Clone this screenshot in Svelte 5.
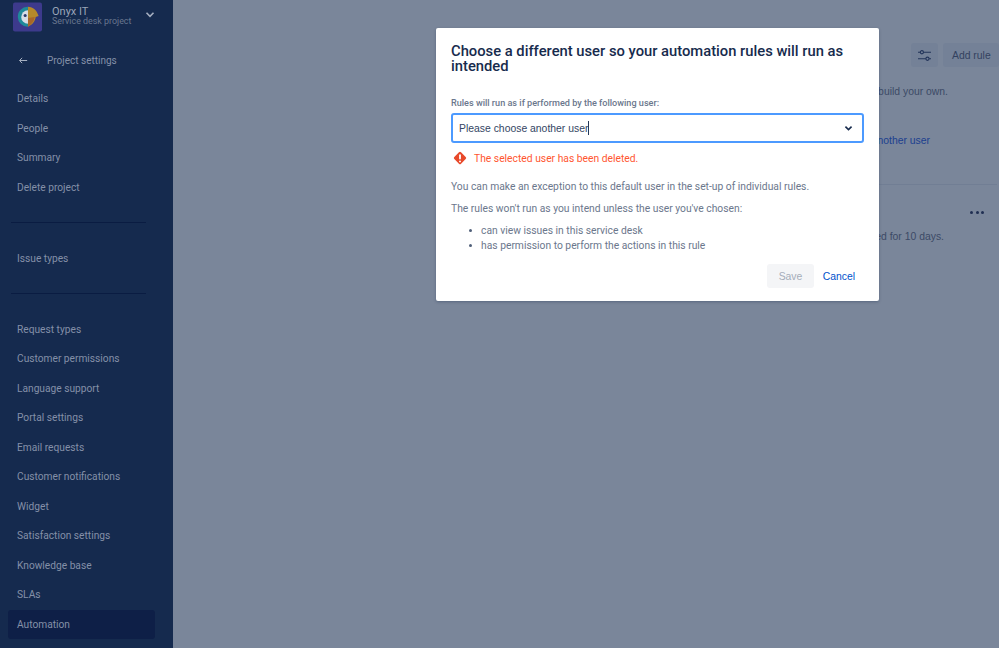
<script>
  const groups = [
    ['Details', 'People', 'Summary', 'Delete project'],
    ['Issue types'],
    ['Request types', 'Customer permissions', 'Language support', 'Portal settings', 'Email requests', 'Customer notifications', 'Widget', 'Satisfaction settings', 'Knowledge base', 'SLAs', 'Automation']
  ];
</script>

<div class="page">
  <aside class="sidebar">
    <header class="project">
      <svg class="logo" viewBox="0 0 30 30" aria-hidden="true">
        <rect width="30" height="30" rx="2" fill="#3d3a8c"/>
        <path d="M15.500 4.500A10 10 0 0 0 5 15a10 10 0 0 0 10.500 10z" fill="#1f8a9a"/>
        <path d="M15.500 8A7 7 0 0 0 8.500 15a7 7 0 0 0 7 7z" fill="#d8dde6"/>
        <circle cx="12.600" cy="13.500" r="1.600" fill="#2b3a6b"/>
        <path d="M15.500 4.500c5.500 0 9 3.600 11 9.500l-3 1c-.6 4.500-3.500 8-8 10z" fill="#b5892a"/>
        <path d="M15.500 16l7-1c-.8 4.200-3 7.600-7 9.800z" fill="#a8662a"/>
      </svg>
      <div class="project-text">
        <div class="project-name">Onyx IT</div>
        <div class="project-type">Service desk project</div>
      </div>
      <svg class="project-chevron" viewBox="0 0 10 8" aria-hidden="true"><path d="M1.500 1.800 5 5.300l3.500-3.500" /></svg>
    </header>

    <div class="back">
      <svg viewBox="0 0 12 10" aria-hidden="true"><path d="M11 5H2M5 1.800 1.800 5 5 8.200"/></svg>
      <span>Project settings</span>
    </div>

    {#each groups as group, i}
      {#if i > 0}<div class="rule"></div>{/if}
      <nav class="group">
        {#each group as item}
          <div class="item" class:active={item === 'Automation'}>{item}</div>
        {/each}
      </nav>
    {/each}
  </aside>

  <main class="content">
    <div class="toolbar">
      <div class="icon-btn">
        <svg viewBox="0 0 16 14" aria-hidden="true">
          <path d="M1 3.500h2.500M7 3.500h8M1 10.500h8.500M13 10.500h2"/>
          <circle cx="5.200" cy="3.500" r="1.700"/>
          <circle cx="11.200" cy="10.500" r="1.700"/>
        </svg>
      </div>
      <div class="add-rule">Add rule</div>
    </div>
    <p class="intro">Use a template or build your own.</p>
    <a class="actor" href="#top">Choose another user</a>
    <div class="divider"></div>
    <div class="more"><i></i><i></i><i></i></div>
    <p class="note">This rule has been disabled for 10 days.</p>
  </main>

  <section class="modal" role="dialog">
    <h1>Choose a different user so your automation rules will run as intended</h1>
    <div class="label">Rules will run as if performed by the following user:</div>
    <div class="select">
      <span class="value">Please choose another user</span><span class="caret"></span>
      <svg viewBox="0 0 10 8" aria-hidden="true"><path d="M1.500 1.800 5 5.300l3.500-3.500"/></svg>
    </div>
    <div class="error">
      <svg viewBox="0 0 24 24" aria-hidden="true">
        <path d="M13.416 4.417a2.002 2.002 0 0 0-2.832 0l-6.168 6.167a2.002 2.002 0 0 0 0 2.833l6.168 6.167a2.002 2.002 0 0 0 2.832 0l6.168-6.167a2.002 2.002 0 0 0 0-2.833l-6.168-6.167z" fill="#e8492a"/>
        <rect x="10.800" y="7" width="2.400" height="7" rx="1.200" fill="#fff"/>
        <circle cx="12" cy="16.500" r="1.300" fill="#fff"/>
      </svg>
      <span>The selected user has been deleted.</span>
    </div>
    <p class="first">You can make an exception to this default user in the set-up of individual rules.</p>
    <p class="second">The rules won't run as you intend unless the user you've chosen:</p>
    <ul>
      <li>can view issues in this service desk</li>
      <li>has permission to perform the actions in this rule</li>
    </ul>
    <footer>
      <button class="save" disabled>Save</button>
      <button class="cancel">Cancel</button>
    </footer>
  </section>
</div>

<style>
  :global(body) {
    margin: 0;
    background: #7a869a;
  }

  .page {
    position: relative;
    display: flex;
    width: 999px;
    height: 648px;
    overflow: hidden;
    background: #7a869a;
    font-family: Roboto, sans-serif;
  }

  .sidebar {
    flex: 0 0 173px;
    min-width: 0;
    display: flex;
    flex-direction: column;
    background: #152a4e;
    color: #8490a8;
    font-size: 10.200px;
  }

  .project {
    display: flex;
    align-items: center;
    height: 31px;
    padding: 1px 0 0 13px;
  }

  .logo {
    width: 29px;
    height: 30px;
    flex: none;
  }

  .project-text {
    margin-left: 10px;
    flex: 1;
    line-height: 11px;
  }

  .project-name {
    color: #9aa5b8;
    font-size: 11px;
  }

  .project-type {
    margin-top: -0.500px;
    color: #69778f;
    font-size: 8.900px;
    white-space: nowrap;
  }

  .project-chevron {
    width: 10px;
    height: 8px;
    margin-right: 18px;
    margin-top: -3px;
    flex: none;
    fill: none;
    stroke: #a5afc0;
    stroke-width: 1.600;
  }

  .back {
    display: flex;
    align-items: center;
    height: 20px;
    margin-top: 18.500px;
    padding-left: 18px;
    color: #8490a8;
    font-size: 10px;
  }

  .back svg {
    width: 10px;
    height: 9px;
    margin-right: 19px;
    fill: none;
    stroke: #a5afc0;
    stroke-width: 1.200;
  }

  .group {
    display: flex;
    flex-direction: column;
  }

  .back + .group {
    margin-top: 13.500px;
  }

  .item {
    height: 29.500px;
    line-height: 29.500px;
    margin: 0 18px 0 8px;
    padding-left: 9px;
    border-radius: 3px;
    white-space: nowrap;
  }

  .item.active {
    background: #0e1f47;
  }

  .rule {
    height: 1px;
    margin: 19.500px 27px 21px 11px;
    background: #0a1c42;
  }

  .content {
    flex: 1;
    min-width: 0;
    display: flex;
    flex-direction: column;
    align-items: flex-end;
    padding-top: 43px;
    color: #3c4a66;
    font-family: "Liberation Sans", sans-serif;
    font-size: 10.400px;
  }

  .toolbar {
    display: flex;
    gap: 5px;
    height: 24px;
  }

  .icon-btn,
  .add-rule {
    background: #748197;
    border-radius: 3px;
  }

  .icon-btn {
    display: flex;
    align-items: center;
    justify-content: center;
    width: 27px;
  }

  .icon-btn svg {
    width: 15px;
    height: 13px;
    fill: none;
    stroke: #22345a;
    stroke-width: 1.200;
  }

  .add-rule {
    width: 47px;
    padding-left: 9px;
    line-height: 25px;
    color: #33415f;
  }

  .intro {
    margin: 18px 51px 0 0;
    line-height: 14px;
  }

  .actor {
    margin: 35px 69px 0 0;
    line-height: 14px;
    color: #1a3f8f;
    text-decoration: none;
  }

  .divider {
    width: 300px;
    height: 1px;
    margin: 36px 2px 0 0;
    background: #717e94;
  }

  .more {
    display: flex;
    gap: 2.500px;
    margin: 26px 15px 0 0;
  }

  .more i {
    width: 3px;
    height: 3px;
    border-radius: 50%;
    background: #1f2f52;
  }

  .note {
    margin: 16px 55px 0 0;
    line-height: 14px;
  }

  .modal {
    position: absolute;
    left: 436px;
    top: 28px;
    box-sizing: border-box;
    width: 443px;
    height: 273px;
    padding: 16px 15px 0;
    background: #fff;
    border-radius: 2px;
    box-shadow: 0 1px 3px rgba(9, 30, 66, 0.3);
    color: #6b778c;
    font-size: 10.300px;
  }

  h1 {
    margin: 0;
    color: #172b4d;
    font-size: 14.750px;
    font-weight: 500;
    line-height: 15px;
  }

  .label {
    margin-top: 22px;
    font-size: 9.100px;
    font-weight: 500;
    line-height: 14px;
  }

  .select {
    display: flex;
    align-items: center;
    box-sizing: border-box;
    height: 30px;
    margin-top: 3px;
    padding: 0 9px 0 6px;
    border: 2px solid #4c9aff;
    border-radius: 3px;
    color: #344563;
    font-family: "Liberation Sans", sans-serif;
    font-size: 10.400px;
  }

  .caret {
    width: 1px;
    height: 14px;
    background: #253858;
  }

  .select svg {
    width: 9px;
    height: 7px;
    margin-left: auto;
    fill: none;
    stroke: #172b4d;
    stroke-width: 1.800;
  }

  .error {
    display: flex;
    align-items: center;
    height: 16px;
    margin-top: 7px;
    color: #ff5630;
  }

  .error svg {
    width: 18px;
    height: 18px;
    margin-right: 5px;
  }

  p {
    margin: 0;
    line-height: 14px;
  }

  .first {
    margin-top: 14px;
  }

  .second {
    margin-top: 8px;
  }

  ul {
    margin: 7px 0 0;
    padding-left: 30px;
    list-style: none;
  }

  li {
    position: relative;
    height: 15px;
    line-height: 15px;
  }

  li::before {
    content: "";
    position: absolute;
    left: -12.500px;
    top: 5.500px;
    width: 3.500px;
    height: 3.500px;
    border-radius: 50%;
    background: #505f79;
  }

  footer {
    display: flex;
    align-items: center;
    justify-content: flex-end;
    margin-top: 11px;
  }

  button {
    height: 24px;
    padding: 0;
    border: 0;
    border-radius: 3px;
    background: none;
    font-family: "Liberation Sans", sans-serif;
    font-size: 10.400px;
  }

  .save {
    width: 47px;
    background: #f4f5f7;
    color: #a5adba;
  }

  .cancel {
    width: 50px;
    color: #0052cc;
  }
</style>
